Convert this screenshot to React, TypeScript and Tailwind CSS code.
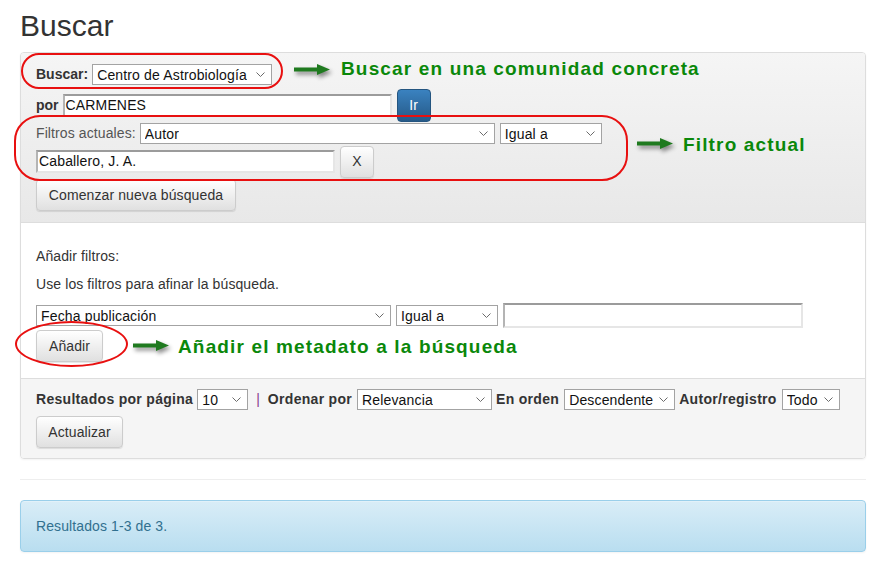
import React from 'react';

const font = { fontFamily: '"Liberation Sans", Arial, sans-serif' };

const Chevron: React.FC = () => (
  <svg width="9" height="6" viewBox="0 0 9 6" className="shrink-0">
    <polyline points="0.5,0.5 4.5,4.5 8.5,0.5" fill="none" stroke="#6b6b6b" strokeWidth="1" />
  </svg>
);

const Sel: React.FC<{ w: string; value: string }> = ({ w, value }) => (
  <div className={`${w} h-[21px] flex items-center justify-between border border-[#a3a3a3] bg-white pl-[4px] pr-[6px] text-[14px] tracking-[0.15px] text-[#111] leading-[18px] whitespace-nowrap shrink-0`}>
    <span className="truncate">{value}</span>
    <Chevron />
  </div>
);

const Inp: React.FC<{ w: string; h: string; value?: string }> = ({ w, h, value }) => (
  <div className={`${w} ${h} flex items-center border-2 border-t-[#9b9b9b] border-l-[#b4b4b4] border-b-[#e6e6e6] border-r-[#e6e6e6] bg-white pl-[1px] text-[14px] tracking-[0.15px] text-[#111] whitespace-nowrap shrink-0`}>
    {value}
  </div>
);

const Btn: React.FC<{ className?: string; children: React.ReactNode }> = ({ className = '', children }) => (
  <div className={`h-[32px] flex items-center justify-center px-[12px] rounded-[4px] border border-[#ccc] bg-linear-to-b from-white to-[#e0e0e0] text-[14px] tracking-[0.1px] text-[#333] whitespace-nowrap shadow-[0_1px_1px_rgba(0,0,0,0.1)] shrink-0 ${className}`}>
    {children}
  </div>
);

const Arrow: React.FC<{ className: string }> = ({ className }) => (
  <svg width="40" height="18" viewBox="0 0 40 18" className={`absolute drop-shadow-[2px_3px_2px_rgba(0,0,0,0.45)] ${className}`}>
    <rect x="1" y="6.5" width="25" height="4" fill="#1f7a1f" />
    <polygon points="24,3 37,8.5 24,14" fill="#1f7a1f" />
  </svg>
);

const Note: React.FC<{ className: string; children: React.ReactNode }> = ({ className, children }) => (
  <div className={`absolute text-[19px] leading-[22px] font-bold tracking-[1.15px] text-[#0a880a] whitespace-nowrap ${className}`}>
    {children}
  </div>
);

export default function App() {
  return (
    <div className="relative w-[876px] h-[564px] bg-white pl-[20px] pr-[10px] pt-[9px] overflow-hidden" style={font}>
      <h1 className="text-[30px] leading-[33px] text-[#333] mb-[10px]">Buscar</h1>

      <div className="border border-[#ddd] rounded-[4px] shadow-[0_1px_2px_rgba(0,0,0,0.05)] overflow-hidden">
        {/* heading */}
        <div className="bg-linear-to-b from-[#f5f5f5] to-[#e8e8e8] border-b border-[#ddd] px-[15px] pt-[11px] pb-[11px]">
          <div className="flex items-center gap-[4px] h-[21px]">
            <span className="font-bold text-[14px] text-[#333]">Buscar:</span>
            <Sel w="w-[180px]" value="Centro de Astrobiología" />
          </div>
          <div className="flex items-center mt-[4px] h-[33px]">
            <span className="font-bold text-[14px] text-[#333] mr-[4px]">por</span>
            <Inp w="w-[329px]" h="h-[23px]" value="CARMENES" />
            <div className="ml-[5px] w-[34px] h-[33px] flex items-center justify-center rounded-[4px] border border-[#245580] bg-linear-to-b from-[#3a82c0] to-[#265a88] text-white text-[14px]">
              Ir
            </div>
          </div>
          <div className="flex items-center mt-[1px] h-[21px] gap-[4px]">
            <span className="text-[14px] tracking-[0.1px] text-[#555]">Filtros actuales:</span>
            <Sel w="w-[355px]" value="Autor" />
            <Sel w="w-[102px] ml-[1px]" value="Igual a" />
          </div>
          <div className="flex items-center mt-[1px] h-[33px] gap-[5px]">
            <Inp w="w-[299px]" h="h-[23px]" value="Caballero, J. A." />
            <Btn className="w-[34px] px-0">X</Btn>
          </div>
          <div className="mt-[1px] flex">
            <Btn className="w-[200px] px-0">Comenzar nueva búsqueda</Btn>
          </div>
        </div>

        {/* body */}
        <div className="bg-white border-b border-[#ddd] px-[15px] pt-[23px] pb-[16px]">
          <p className="text-[14px] leading-[20px] tracking-[0.1px] text-[#333]">Añadir filtros:</p>
          <p className="text-[14px] leading-[20px] tracking-[0.1px] text-[#333] mt-[8px]">Use los filtros para afinar la búsqueda.</p>
          <div className="flex items-center mt-[9px] h-[25px] gap-[5px]">
            <Sel w="w-[355px]" value="Fecha publicación" />
            <Sel w="w-[102px]" value="Igual a" />
            <Inp w="w-[300px]" h="h-[25px]" />
          </div>
          <div className="mt-[2px] flex">
            <Btn className="w-[67px] px-0">Añadir</Btn>
          </div>
        </div>

        {/* footer */}
        <div className="bg-[#f5f5f5] px-[15px] pt-[10px] pb-[10px]">
          <div className="flex items-center h-[21px] text-[14px] text-[#333] whitespace-nowrap">
            <span className="font-bold tracking-[0.3px]">Resultados por página</span>
            <Sel w="w-[51px] ml-[4px]" value="10" />
            <span className="mx-[8px] text-[#8a3d8f]">|</span>
            <span className="font-bold tracking-[0.3px]">Ordenar por</span>
            <Sel w="w-[135px] ml-[5px]" value="Relevancia" />
            <span className="font-bold tracking-[0.3px] ml-[4px]">En orden</span>
            <Sel w="w-[111px] ml-[5px]" value="Descendente" />
            <span className="font-bold tracking-[0.3px] ml-[4px]">Autor/registro</span>
            <Sel w="w-[58px] ml-[5px]" value="Todo" />
          </div>
          <div className="mt-[6px] flex">
            <Btn className="w-[87px] px-0">Actualizar</Btn>
          </div>
        </div>
      </div>

      <hr className="mt-[20px] border-0 border-t border-[#eee]" />

      <div className="mt-[20px] h-[52px] flex items-center px-[15px] rounded-[4px] border border-[#9acfea] bg-linear-to-b from-[#d9edf7] to-[#b9def0] text-[14px] tracking-[0.1px] text-[#31708f] shadow-[inset_0_1px_0_rgba(255,255,255,0.25),0_1px_2px_rgba(0,0,0,0.05)]">
        Resultados 1-3 de 3.
      </div>

      {/* annotations */}
      <div className="absolute left-[21px] top-[53px] w-[262px] h-[36px] rounded-[18px] border-2 border-[#e81010]" />
      <div className="absolute left-[14px] top-[115px] w-[614px] h-[66px] rounded-[26px] border-2 border-[#e81010]" />
      <div className="absolute left-[15px] top-[321px] w-[113px] h-[46px] rounded-[50%] border-2 border-[#e81010]" />

      <Arrow className="left-[293px] top-[61px]" />
      <Note className="left-[341px] top-[58px]">Buscar en una comunidad concreta</Note>
      <Arrow className="left-[636px] top-[135px]" />
      <Note className="left-[683px] top-[134px]">Filtro actual</Note>
      <Arrow className="left-[132px] top-[337px]" />
      <Note className="left-[178px] top-[336px]">Añadir el metadato a la búsqueda</Note>
    </div>
  );
}
